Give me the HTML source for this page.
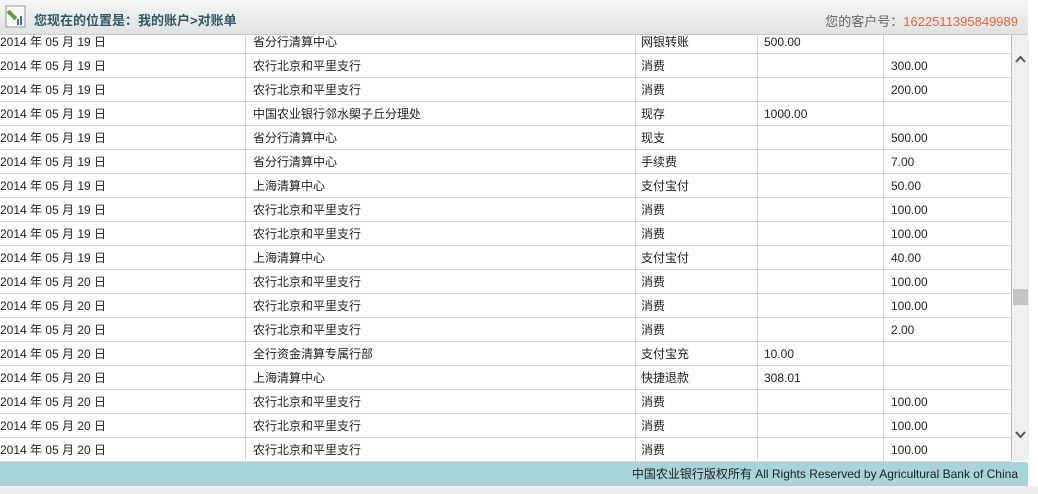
<!DOCTYPE html><html><head><meta charset="utf-8"><style>
body{margin:0;width:1038px;height:494px;position:relative;overflow:hidden;background:#fff;font-family:"Liberation Sans","Noto Sans CJK SC",sans-serif;font-size:12px;color:#222}
.hdr{position:absolute;left:0;top:0;width:1028px;height:34px;background:linear-gradient(#f4f5f5,#dfe1e2);border-bottom:1px solid #c8cacb;z-index:2}
.hdr .t{position:absolute;left:34px;top:10px;font-size:13px;font-weight:bold;color:#2e5a66}
.hdr .c{position:absolute;right:10px;top:11px;font-size:13px;color:#666}
.hdr .c span{color:#e8673a}
.tbl{position:absolute;left:0;top:30px;width:1011px}
.r{height:23px;border-bottom:1px solid #d6d6d6;position:relative;line-height:24px}
.r div{position:absolute;top:0;height:24px}
.c1{left:0}.c2{left:253px}.c3{left:641px}.c4{left:764px}.c5{left:891px}
.v{position:absolute;top:29px;height:432px;width:1px;background:#d6d6d6}
.sb{position:absolute;left:1011px;top:34px;width:17px;height:427px;background:#f0f0f0;border-left:1px solid #bbb}
.foot{position:absolute;left:0;top:462px;width:1028px;height:24px;background:#a6d4d8;text-align:right;line-height:24px;font-size:12px;color:#222}
.bot{position:absolute;left:0;top:486px;width:1038px;height:8px;background:#eceeef}
</style></head><body>
<div class="hdr">
<svg style="position:absolute;left:4px;top:5px" width="24" height="24"><rect x="2" y="1" width="19" height="21" fill="#f8f8f8" stroke="#999"/><path d="M4 6 L12 14" stroke="#6a9a3a" stroke-width="4"/><rect x="13" y="14" width="2" height="6" fill="#3a70b0"/><rect x="16" y="11" width="2" height="9" fill="#3a70b0"/></svg>
<div class="t">您现在的位置是：我的账户&gt;对账单</div>
<div class="c">您的客户号：<span>1622511395849989</span></div>
</div>
<div class="tbl">
<div class="r"><div class="c1">2014 年 05 月 19 日</div><div class="c2">省分行清算中心</div><div class="c3">网银转账</div><div class="c4">500.00</div><div class="c5"></div></div>
<div class="r"><div class="c1">2014 年 05 月 19 日</div><div class="c2">农行北京和平里支行</div><div class="c3">消费</div><div class="c4"></div><div class="c5">300.00</div></div>
<div class="r"><div class="c1">2014 年 05 月 19 日</div><div class="c2">农行北京和平里支行</div><div class="c3">消费</div><div class="c4"></div><div class="c5">200.00</div></div>
<div class="r"><div class="c1">2014 年 05 月 19 日</div><div class="c2">中国农业银行邻水㮾子丘分理处</div><div class="c3">现存</div><div class="c4">1000.00</div><div class="c5"></div></div>
<div class="r"><div class="c1">2014 年 05 月 19 日</div><div class="c2">省分行清算中心</div><div class="c3">现支</div><div class="c4"></div><div class="c5">500.00</div></div>
<div class="r"><div class="c1">2014 年 05 月 19 日</div><div class="c2">省分行清算中心</div><div class="c3">手续费</div><div class="c4"></div><div class="c5">7.00</div></div>
<div class="r"><div class="c1">2014 年 05 月 19 日</div><div class="c2">上海清算中心</div><div class="c3">支付宝付</div><div class="c4"></div><div class="c5">50.00</div></div>
<div class="r"><div class="c1">2014 年 05 月 19 日</div><div class="c2">农行北京和平里支行</div><div class="c3">消费</div><div class="c4"></div><div class="c5">100.00</div></div>
<div class="r"><div class="c1">2014 年 05 月 19 日</div><div class="c2">农行北京和平里支行</div><div class="c3">消费</div><div class="c4"></div><div class="c5">100.00</div></div>
<div class="r"><div class="c1">2014 年 05 月 19 日</div><div class="c2">上海清算中心</div><div class="c3">支付宝付</div><div class="c4"></div><div class="c5">40.00</div></div>
<div class="r"><div class="c1">2014 年 05 月 20 日</div><div class="c2">农行北京和平里支行</div><div class="c3">消费</div><div class="c4"></div><div class="c5">100.00</div></div>
<div class="r"><div class="c1">2014 年 05 月 20 日</div><div class="c2">农行北京和平里支行</div><div class="c3">消费</div><div class="c4"></div><div class="c5">100.00</div></div>
<div class="r"><div class="c1">2014 年 05 月 20 日</div><div class="c2">农行北京和平里支行</div><div class="c3">消费</div><div class="c4"></div><div class="c5">2.00</div></div>
<div class="r"><div class="c1">2014 年 05 月 20 日</div><div class="c2">全行资金清算专属行部</div><div class="c3">支付宝充</div><div class="c4">10.00</div><div class="c5"></div></div>
<div class="r"><div class="c1">2014 年 05 月 20 日</div><div class="c2">上海清算中心</div><div class="c3">快捷退款</div><div class="c4">308.01</div><div class="c5"></div></div>
<div class="r"><div class="c1">2014 年 05 月 20 日</div><div class="c2">农行北京和平里支行</div><div class="c3">消费</div><div class="c4"></div><div class="c5">100.00</div></div>
<div class="r"><div class="c1">2014 年 05 月 20 日</div><div class="c2">农行北京和平里支行</div><div class="c3">消费</div><div class="c4"></div><div class="c5">100.00</div></div>
<div class="r"><div class="c1">2014 年 05 月 20 日</div><div class="c2">农行北京和平里支行</div><div class="c3">消费</div><div class="c4"></div><div class="c5">100.00</div></div>
</div>
<div class="v" style="left:245px"></div><div class="v" style="left:635px"></div><div class="v" style="left:757px"></div><div class="v" style="left:883px"></div>
<div class="sb">
<svg style="position:absolute;left:2px;top:20px" width="13" height="10"><path d="M2 8 L6.5 3 L11 8" fill="none" stroke="#555" stroke-width="2"/></svg>
<div style="position:absolute;left:1px;top:255px;width:15px;height:16px;background:#c4c4c4"></div>
<svg style="position:absolute;left:2px;top:396px" width="13" height="10"><path d="M2 2 L6.5 7 L11 2" fill="none" stroke="#555" stroke-width="2"/></svg>
</div>
<div class="foot"><span style="margin-right:10px">中国农业银行版权所有 All Rights Reserved by Agricultural Bank of China</span></div>
<div class="bot"></div>
</body></html>
